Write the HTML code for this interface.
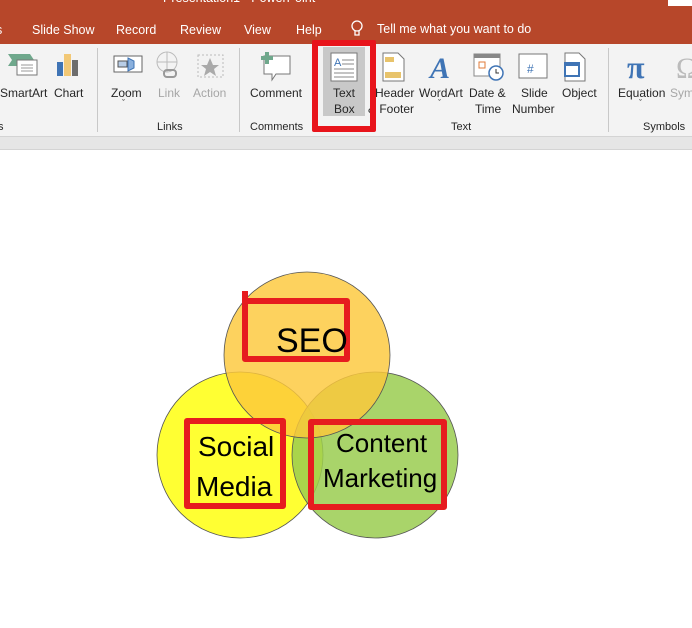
<!DOCTYPE html>
<html><head><meta charset="utf-8"><style>
body{margin:0;width:692px;height:628px;overflow:hidden;background:#fff;font-family:"Liberation Sans",sans-serif;position:relative}
.t{position:absolute;font-size:12px;color:#262626;white-space:nowrap}
.w{color:#fff;font-size:12.5px}
.g{color:#a6a6a6}
</style></head><body>
<div style="position:absolute;left:0;top:0;width:692px;height:44px;background:#b7472a"></div>
<div style="position:absolute;left:668px;top:0;width:24px;height:6px;background:#fff"></div>
<div class="t w" style="left:163px;top:-9px">Presentation1 - PowerPoint</div>
<div class="t w" style="left:-4px;top:23px">s</div>
<div class="t w" style="left:32px;top:23px">Slide Show</div>
<div class="t w" style="left:116px;top:23px">Record</div>
<div class="t w" style="left:180px;top:23px">Review</div>
<div class="t w" style="left:244px;top:23px">View</div>
<div class="t w" style="left:296px;top:23px">Help</div>
<svg style="position:absolute;left:350px;top:20px" width="14" height="18"><circle cx="7" cy="6" r="5" fill="none" stroke="#fff" stroke-width="1.3"/><path d="M5 11v4h4v-4" fill="none" stroke="#fff" stroke-width="1.3"/></svg>
<div class="t w" style="left:377px;top:22px">Tell me what you want to do</div>
<div style="position:absolute;left:0;top:44px;width:692px;height:92px;background:#f3f3f3"></div>
<div style="position:absolute;left:0;top:136px;width:692px;height:12px;background:#e6e6e6;border-top:1px solid #d4d4d4;border-bottom:1px solid #d4d4d4"></div>
<div style="position:absolute;left:97px;top:48px;width:1px;height:84px;background:#c8c8c8"></div>
<div style="position:absolute;left:239px;top:48px;width:1px;height:84px;background:#c8c8c8"></div>
<div style="position:absolute;left:608px;top:48px;width:1px;height:84px;background:#c8c8c8"></div>
<div style="position:absolute;left:323px;top:47px;width:42px;height:69px;background:#c8c8c8"></div>
<svg style="position:absolute;left:0;top:50px" width="692" height="36">
<path d="M8 4h22l4 6-4 6H8l4-6z" fill="#6fa88c"/><rect x="17" y="10" width="20" height="15" fill="#fff" stroke="#777"/><path d="M21 15h12M21 18h12M21 21h12" stroke="#999"/>
<rect x="57" y="12" width="6" height="14" fill="#3f74b5"/><rect x="64" y="4" width="7" height="22" fill="#f2c876"/><rect x="72" y="10" width="6" height="16" fill="#6d6d6d"/>
<rect x="114" y="6" width="28" height="16" fill="#fff" stroke="#666"/><rect x="118" y="11" width="9" height="6" fill="#b8cde6" stroke="#555"/><path d="M128 8l6 3v7l-6 3z" fill="#8ab0dd" stroke="#3f74b5"/>
<circle cx="167" cy="12" r="10" fill="none" stroke="#bbb"/><path d="M157 12h20M167 2v20" stroke="#bbb"/><rect x="164" y="20" width="12" height="7" rx="3" fill="none" stroke="#999" stroke-width="2"/>
<rect x="198" y="5" width="25" height="22" fill="none" stroke="#bbb" stroke-dasharray="2 2"/><path d="M210 8l3 7h6l-5 4 2 7-6-4-6 4 2-7-5-4h6z" fill="#aaa"/>
<path d="M264 6h26v18h-14l-4 6v-6h-8z" fill="#fff" stroke="#777"/><path d="M267 2v12M261 8h12" stroke="#6fa88c" stroke-width="4"/>
<rect x="331" y="3" width="26" height="28" fill="#fff" stroke="#777"/><text x="334" y="16" font-size="11" fill="#3f74b5" font-family="Liberation Sans">A</text><path d="M342 10h12M342 14h12M334 19h20M334 23h20M334 27h20" stroke="#888"/>
<path d="M383 3h15l6 6v22h-21z" fill="#fff" stroke="#777"/><rect x="385" y="7" width="9" height="5" fill="#e8c36b"/><rect x="385" y="22" width="16" height="6" fill="#e8c36b"/>
<text x="430" y="28" font-size="30" font-style="italic" font-weight="bold" fill="#3f74b5" font-family="Liberation Serif">A</text>
<rect x="474" y="4" width="26" height="22" fill="#fff" stroke="#888"/><rect x="474" y="4" width="26" height="4" fill="#888"/><rect x="479" y="12" width="6" height="6" fill="none" stroke="#e07b39"/><circle cx="496" cy="23" r="7" fill="#fff" stroke="#3f74b5" stroke-width="1.5"/><path d="M496 19v4h3" stroke="#333" fill="none"/>
<rect x="519" y="4" width="28" height="24" fill="#fff" stroke="#777"/><text x="527" y="23" font-size="12" fill="#3f74b5" font-family="Liberation Sans">#</text>
<path d="M565 3h14l6 6v22h-20z" fill="#fff" stroke="#777"/><rect x="565" y="13" width="14" height="13" fill="#fff" stroke="#3f74b5" stroke-width="2"/><rect x="565" y="13" width="14" height="3" fill="#3f74b5"/>
<text x="627" y="28" font-size="32" fill="#3f74b5" font-family="Liberation Serif" font-weight="bold">π</text>
<text x="676" y="28" font-size="30" fill="#bbb" font-family="Liberation Serif">Ω</text>
</svg>
<div class="t" style="left:0;top:86px">SmartArt</div>
<div class="t" style="left:54px;top:86px">Chart</div>
<div class="t" style="left:111px;top:86px">Zoom</div>
<div class="t" style="left:122px;top:98px;font-size:9px">ˇ</div>
<div class="t g" style="left:158px;top:86px">Link</div>
<div class="t g" style="left:193px;top:86px">Action</div>
<div class="t" style="left:250px;top:86px">Comment</div>
<div class="t" style="left:333px;top:86px">Text</div>
<div class="t" style="left:334px;top:102px">Box</div>
<div class="t" style="left:375px;top:86px">Header</div>
<div class="t" style="left:368px;top:102px">&amp; Footer</div>
<div class="t" style="left:419px;top:86px">WordArt</div>
<div class="t" style="left:438px;top:98px;font-size:9px">ˇ</div>
<div class="t" style="left:469px;top:86px">Date &amp;</div>
<div class="t" style="left:475px;top:102px">Time</div>
<div class="t" style="left:521px;top:86px">Slide</div>
<div class="t" style="left:512px;top:102px">Number</div>
<div class="t" style="left:562px;top:86px">Object</div>
<div class="t" style="left:618px;top:86px">Equation</div>
<div class="t" style="left:639px;top:98px;font-size:9px">ˇ</div>
<div class="t g" style="left:670px;top:86px">Sym</div>
<div class="t" style="left:-2px;top:121px;font-size:11px">s</div>
<div class="t" style="left:157px;top:121px;font-size:11px">Links</div>
<div class="t" style="left:250px;top:121px;font-size:11px">Comments</div>
<div class="t" style="left:451px;top:121px;font-size:11px">Text</div>
<div class="t" style="left:643px;top:121px;font-size:11px">Symbols</div>
<div style="position:absolute;left:312px;top:40px;width:52px;height:80px;border:6px solid #e8141b;border-radius:2px"></div>
<svg style="position:absolute;left:0;top:0" width="692" height="628">
<circle cx="240" cy="455" r="83" fill="#ffff33" stroke="#555" stroke-width="0.8"/>
<circle cx="375" cy="455" r="83" fill="#9acd50" fill-opacity="0.85" stroke="#555" stroke-width="0.8"/>
<circle cx="307" cy="355" r="83" fill="#fdc83a" fill-opacity="0.82" stroke="#555" stroke-width="0.8"/>
<g fill="none" stroke="#e61c1f" stroke-width="6" stroke-linejoin="round">
<path d="M245 291v68h102v-58H247"/>
<rect x="187" y="421" width="96" height="85"/>
<rect x="311" y="422" width="133" height="85"/>
</g>
<g font-family="Liberation Sans" fill="#000">
<text x="276" y="352" font-size="34">SEO</text>
<text x="198" y="456" font-size="28">Social</text>
<text x="196" y="496" font-size="28">Media</text>
<text x="336" y="452" font-size="26">Content</text>
<text x="323" y="487" font-size="26">Marketing</text>
</g>
</svg>
</body></html>
